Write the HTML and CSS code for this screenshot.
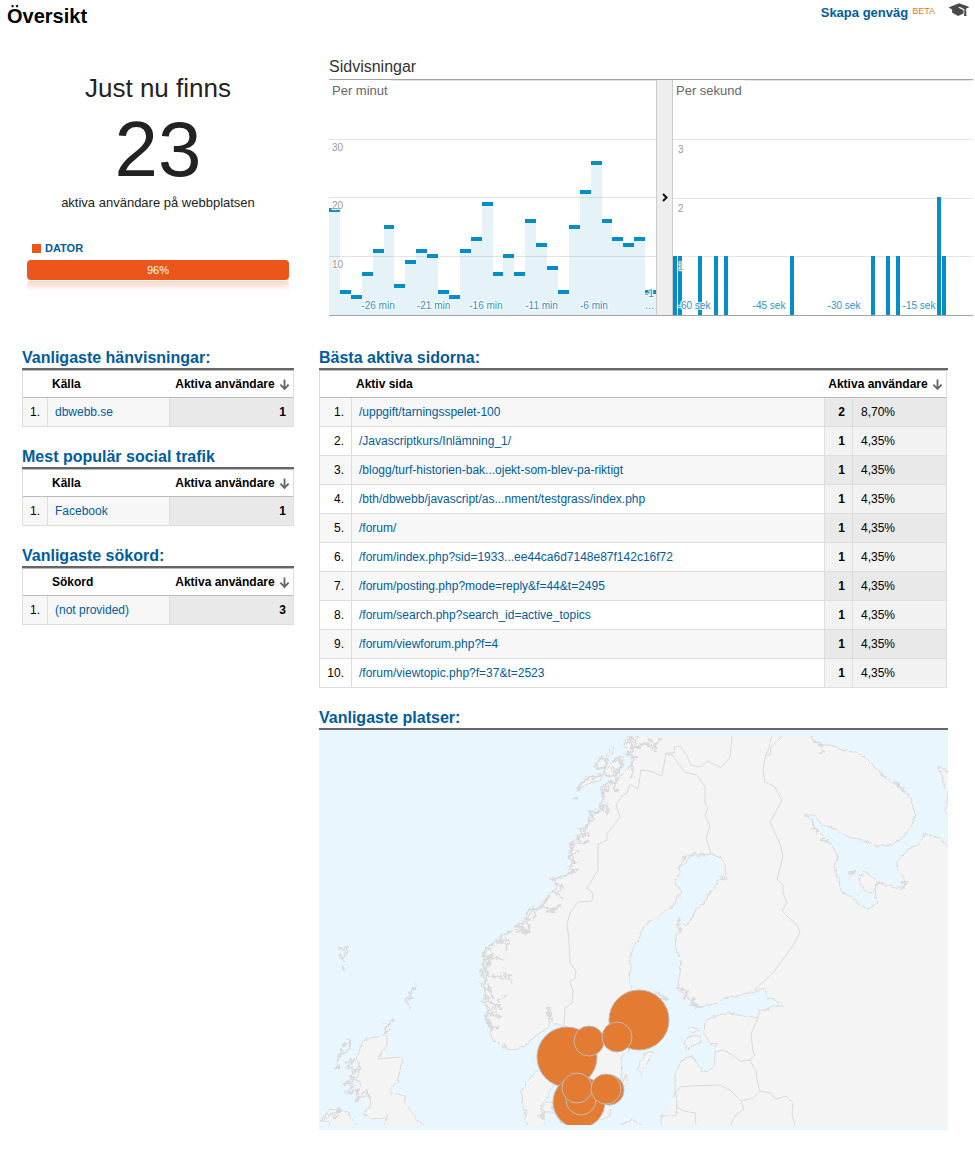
FILE: index.html
```html
<!DOCTYPE html>
<html lang="sv">
<head>
<meta charset="utf-8">
<title>Översikt</title>
<link rel="stylesheet" href="styles.css">
</head>
<body>
<header class="topbar">
  <h1>Översikt</h1>
  <div class="tools">
    <a class="shortcut" href="#">Skapa genväg</a><span class="beta">BETA</span>
    <svg class="hat" viewBox="0 0 22 14" aria-hidden="true"><path d="M0.500 4.500 L11 0.300 L21.500 4 L18 5.800 L18.500 13 H15.900 L16.400 9 V6.200 L12 4 L10 4.600 L15.600 7.200 L15.500 10.500 L10 13 L4 9.500 L4.200 6.600 Z" fill="#4a4a4a"/></svg>
  </div>
</header>
<main>
<div class="live">
  <section class="now">
    <div class="now-title">Just nu finns</div>
    <div class="now-count">23</div>
    <div class="now-sub">aktiva användare på webbplatsen</div>
    <div class="legend"><span class="swatch"></span><a href="#">DATOR</a></div>
    <div class="meter">96%</div>
    <div class="mirror"></div>
  </section>
  <section class="views">
    <h2 class="views-title">Sidvisningar</h2>
    <div class="charts">
      <div class="chart">
        <svg class="plot" viewBox="0 0 327 235" preserveAspectRatio="none" aria-hidden="true">
          <path id="area" fill="#e5f2f8"/>
          <path d="M62 .5H327M0 59.500H327M0 117.500H327M0 176.500H327" stroke="#6e7d85" stroke-opacity=".2"/>
          <path id="marks" fill="#058dc7"/>
        </svg>
        <span class="chart-name">Per minut</span>
        <span class="tick y30">30</span><span class="tick y20">20</span><span class="tick y10">10</span>
        <span class="time m26">-26 min</span><span class="time m21">-21 min</span><span class="time m16">-16 min</span><span class="time m11">-11 min</span><span class="time m6">-6 min</span><span class="time m1">-1 …</span>
      </div>
      <button class="toggle" aria-label="Växla"><svg viewBox="0 0 6 9" aria-hidden="true"><path d="M1 1 L4.500 4.500 L1 8" fill="none" stroke="#111" stroke-width="2"/></svg></button>
      <div class="chart">
        <svg class="plot" viewBox="0 0 300 235" preserveAspectRatio="none" aria-hidden="true">
          <path id="seconds" fill="#058dc7"/>
          <path d="M72 .5H300M0 59.500H300M0 118.500H300M0 176.500H300" stroke="#6e7d85" stroke-opacity=".2"/>
        </svg>
        <span class="chart-name">Per sekund</span>
        <span class="tick s3">3</span><span class="tick s2">2</span><span class="tick s1">1</span>
        <span class="time t60">-60 sek</span><span class="time t45">-45 sek</span><span class="time t30">-30 sek</span><span class="time t15">-15 sek</span>
      </div>
    </div>
  </section>
</div>
<div class="reports">
  <div class="col">
    <section class="report">
      <h2><a href="#">Vanligaste hänvisningar:</a></h2>
      <table class="small">
        <thead><tr><th class="n"></th><th>Källa</th><th class="sort">Aktiva användare <svg class="arrow" viewBox="0 0 12 12"><path d="M6 0V10M1.500 5.500L6 10.300L10.500 5.500"/></svg></th></tr></thead>
        <tbody><tr><td class="n">1.</td><td><a href="#">dbwebb.se</a></td><td class="v">1</td></tr></tbody>
      </table>
    </section>
    <section class="report">
      <h2><a href="#">Mest populär social trafik</a></h2>
      <table class="small">
        <thead><tr><th class="n"></th><th>Källa</th><th class="sort">Aktiva användare <svg class="arrow" viewBox="0 0 12 12"><path d="M6 0V10M1.500 5.500L6 10.300L10.500 5.500"/></svg></th></tr></thead>
        <tbody><tr><td class="n">1.</td><td><a href="#">Facebook</a></td><td class="v">1</td></tr></tbody>
      </table>
    </section>
    <section class="report">
      <h2><a href="#">Vanligaste sökord:</a></h2>
      <table class="small">
        <thead><tr><th class="n"></th><th>Sökord</th><th class="sort">Aktiva användare <svg class="arrow" viewBox="0 0 12 12"><path d="M6 0V10M1.500 5.500L6 10.300L10.500 5.500"/></svg></th></tr></thead>
        <tbody><tr><td class="n">1.</td><td><a href="#">(not provided)</a></td><td class="v">3</td></tr></tbody>
      </table>
    </section>
  </div>
  <div class="col">
    <section class="report">
      <h2><a href="#">Bästa aktiva sidorna:</a></h2>
      <table class="pages">
        <colgroup><col class="c-n"><col><col class="c-v"><col class="c-p"></colgroup>
        <thead><tr><th class="n"></th><th>Aktiv sida</th><th class="sort" colspan="2">Aktiva användare <svg class="arrow" viewBox="0 0 12 12"><path d="M6 0V10M1.500 5.500L6 10.300L10.500 5.500"/></svg></th></tr></thead>
        <tbody>
        <tr><td class="n">1.</td><td><a href="#">/uppgift/tarningsspelet-100</a></td><td class="v">2</td><td class="p">8,70%</td></tr>
        <tr><td class="n">2.</td><td><a href="#">/Javascriptkurs/Inlämning_1/</a></td><td class="v">1</td><td class="p">4,35%</td></tr>
        <tr><td class="n">3.</td><td><a href="#">/blogg/turf-historien-bak...ojekt-som-blev-pa-riktigt</a></td><td class="v">1</td><td class="p">4,35%</td></tr>
        <tr><td class="n">4.</td><td><a href="#">/bth/dbwebb/javascript/as...nment/testgrass/index.php</a></td><td class="v">1</td><td class="p">4,35%</td></tr>
        <tr><td class="n">5.</td><td><a href="#">/forum/</a></td><td class="v">1</td><td class="p">4,35%</td></tr>
        <tr><td class="n">6.</td><td><a href="#">/forum/index.php?sid=1933...ee44ca6d7148e87f142c16f72</a></td><td class="v">1</td><td class="p">4,35%</td></tr>
        <tr><td class="n">7.</td><td><a href="#">/forum/posting.php?mode=reply&amp;f=44&amp;t=2495</a></td><td class="v">1</td><td class="p">4,35%</td></tr>
        <tr><td class="n">8.</td><td><a href="#">/forum/search.php?search_id=active_topics</a></td><td class="v">1</td><td class="p">4,35%</td></tr>
        <tr><td class="n">9.</td><td><a href="#">/forum/viewforum.php?f=4</a></td><td class="v">1</td><td class="p">4,35%</td></tr>
        <tr><td class="n">10.</td><td><a href="#">/forum/viewtopic.php?f=37&amp;t=2523</a></td><td class="v">1</td><td class="p">4,35%</td></tr>
        </tbody>
      </table>
    </section>
    <section class="report">
      <h2><a href="#">Vanligaste platser:</a></h2>
      <svg class="map" viewBox="319 730 629 400" role="img" aria-label="Karta över Nordeuropa">
        <defs>
          <clipPath id="frame"><rect x="319" y="736" width="629" height="389"/></clipPath>
          <filter id="rough" filterUnits="userSpaceOnUse" x="310" y="720" width="650" height="420" color-interpolation-filters="sRGB"><feTurbulence type="fractalNoise" baseFrequency=".28" numOctaves="2" seed="4"/><feDisplacementMap in="SourceGraphic" scale="7" xChannelSelector="R" yChannelSelector="G"/></filter>
          <filter id="worn" filterUnits="userSpaceOnUse" x="310" y="720" width="650" height="420" color-interpolation-filters="sRGB"><feTurbulence type="fractalNoise" baseFrequency=".2" numOctaves="2" seed="9"/><feDisplacementMap in="SourceGraphic" scale="4" xChannelSelector="R" yChannelSelector="G"/></filter>
        </defs>
        <g clip-path="url(#frame)">
          <g class="land" filter="url(#worn)">
            <path d="M632 728 L629 740 L633 748 L628 753 L634 760 L629 768 L623 774 L618 778 L612 784 L604 788 L601 797 L608 803 L604 809 L597 813 L589 815 L590 822 L584 829 L579 834 L580 842 L573 846 L570 853 L574 860 L570 868 L566 875 L555 880 L557 888 L550 893 L546 900 L541 907 L532 910 L527 919 L521 928 L509 932 L502 940 L491 948 L484 954 L483 965 L487 975 L484 983 L485 997 L488 1010 L487 1022 L493 1027 L490 1033 L493 1040 L501 1045 L506 1049 L513 1050 L523 1047 L531 1040 L540 1032 L548 1028 L550 1023 L547 1013 L550 1007 L552 1009 L551 1018 L555 1025 L557 1022 L560 1026 L565 1026 L569 1042 L573 1062 L582 1080 L586 1100 L588 1117 L600 1120 L610 1115 L611 1102 L620 1098 L622 1078 L621 1063 L623 1053 L630 1049 L635 1043 L647 1035 L650 1025 L638 1005 L630 992 L632 986 L629 977 L631 968 L630 957 L632 948 L638 941 L642 931 L644 926 L650 921 L659 916 L666 910 L672 908 L676 899 L682 892 L676 885 L675 880 L680 874 L679 866 L686 862 L690 855 L699 855 L711 854 L719 857 L725 863 L726 876 L727 880 L718 879 L714 888 L707 897 L704 904 L696 910 L692 918 L686 925 L677 924 L680 932 L675 936 L676 949 L681 960 L680 973 L677 989 L685 994 L692 1002 L700 1007 L717 1003 L724 999 L737 996 L747 993 L756 991 L765 988 L767 998 L778 1001 L784 1006 L773 1006 L766 1010 L759 1010 L758 1018 L747 1017 L730 1013 L715 1016 L705 1021 L704 1034 L711 1044 L716 1043 L714 1067 L707 1072 L701 1070 L693 1056 L686 1058 L680 1064 L675 1075 L675 1107 L670 1113 L662 1115 L660 1130 L955 1130 L955 852 L948 847 L942 840 L938 837 L931 836 L925 833 L918 845 L908 849 L897 862 L897 868 L904 879 L906 888 L895 888 L885 884 L878 881 L873 892 L867 893 L860 884 L859 877 L864 872 L873 877 L878 882 L875 889 L877 903 L869 909 L857 904 L853 897 L842 893 L839 881 L834 866 L838 856 L830 843 L820 839 L825 838 L815 828 L811 819 L804 815 L814 815 L823 825 L835 829 L848 837 L863 840 L876 846 L887 846 L900 840 L910 829 L916 815 L913 808 L912 798 L897 785 L889 781 L882 775 L875 767 L864 756 L853 752 L842 750 L830 745 L822 745 L814 741 L806 728 Z"/>
            <path d="M938 766L955 776V822L945 812L948 795ZM687 1029L693 1026L699 1030L693 1034ZM684 1042L689 1036L700 1036L701 1042L692 1046L687 1051ZM640 1063L645 1053L653 1051L648 1063L641 1074L638 1070ZM628 1084L626 1074L620 1089ZM620 1125L633 1120L650 1130H620M662 1115L676 1116L677 1095"/>
            <path d="M596 763L602 757L607 760L605 768L598 769ZM612 763L618 758L623 757L622 767L615 775L608 777L603 772ZM607 755L612 745L614 748L609 757ZM577 793L580 785L587 778L597 777L603 774L600 781L593 782L585 785ZM623 743L628 736L638 737L635 745L627 748Z"/>
            <path d="M566 1068L558 1069L548 1069L540 1070L533 1074L529 1080L525 1086L521 1092L522 1105L526 1112L524 1120L530 1130H543L545 1117L540 1105L548 1098L549 1091L555 1083L558 1076L568 1072ZM545 1104L552 1102L553 1112L545 1112L541 1107ZM558 1104H570L574 1120L561 1123L555 1114Z"/>
            <path d="M387 1036L367 1038L362 1043L358 1054L357 1060L360 1068L357 1079L361 1085L357 1092L360 1099L369 1094L371 1104L364 1115L371 1119L381 1118L388 1115L382 1129H430L418 1121L413 1115L406 1103L403 1095L392 1093L389 1089L397 1083L400 1070L403 1060L399 1057L377 1059L387 1045Z"/>
            <path d="M320 1121L330 1109L349 1112L351 1119L361 1130H331L329 1123Z"/>
          </g>
          <g class="borders">
            <path d="M630 784L627 793L622 796L616 805L620 817L607 834L607 840L598 844L598 870L587 888L593 893L592 901L578 902L570 913L567 924L569 940L570 963L576 971L575 979L570 981L573 992L572 1003L565 1008L564 1026"/>
            <path d="M630 784L638 789L641 770L650 771L662 776L666 753L675 753L674 747L680 746L687 756L691 765L700 767L708 761L721 768L730 757L732 736"/>
            <path d="M665 754L672 755L685 772L697 775L705 787V803L708 808L705 815L710 826L706 838L711 854"/>
            <path d="M772 736L768 750L765 758L763 770L765 782L774 786L782 800L770 822L780 844L783 856L779 872L777 879L783 885L783 893L787 902L782 911L787 916L797 925L800 933L792 947L773 973L754 990M782 736L771 747L770 755L765 755"/>
            <path d="M758 1018L751 1034L753 1052L755 1055L750 1060L740 1061L731 1054L723 1050L715 1052M750 1060L756 1072L757 1080L760 1091L753 1098L741 1101L731 1091L720 1085L690 1086L680 1087L675 1094M741 1101L744 1109L735 1116L730 1126M760 1091L770 1093L776 1099L786 1096L793 1103L792 1114L795 1126M676 1107L684 1111L695 1113L696 1126"/>
          </g>
          <g class="coast" filter="url(#rough)">
            <path d="M632 738L640 748L633 748L647 743L652 749L661 738M648 738L655 745L656 752M627 755L636 757L629 767M633 764L632 777M618 777L613 790L620 790M612 781L601 787L602 795L609 787M604 795L600 807L608 806L607 814L600 808M600 812L589 811L594 820L588 823L584 833M589 817L587 827L580 829L588 835L577 836L580 844L590 841M577 839L571 844L572 856L580 850M574 847L568 858L576 862L569 867L574 872L567 874L578 869M565 877L551 879L558 884L563 888L554 892L562 898M549 895L543 906L552 912L560 906L547 911M542 908L528 910L525 920L516 926L528 930L517 932M536 911L534 918L527 921L530 931L522 934"/>
            <path d="M510 931L501 936L499 943L509 940L506 950M499 939L488 947L493 955L485 957L499 958L505 960M486 947L482 957L489 965L481 972L486 980L481 985L488 991L483 1001L489 1009L485 1018L491 1029L499 1026M484 951L490 963L483 965L488 975L500 977L512 975M503 978L506 971M508 977L512 982M487 984L493 997L486 999L496 1006L487 1012L501 1018M491 1014L500 1007L489 1002M497 1002L508 994M488 1018L494 1030"/>
            <path d="M596 763L602 757L607 760L605 768L598 769ZM612 763L618 758L622 767L615 775L608 777L603 772M577 793L580 785L587 778L597 777L603 774M620 755L622 764L616 775L613 767M626 744L632 737L632 752L626 754M574 798L577 799"/>
            <path d="M339 950L348 947L345 955L340 955L345 962M342 965L345 970M416 985L410 994L412 998L405 999L410 1007M395 1019L386 1026L384 1033L391 1029M350 1040L342 1048L340 1056L350 1048ZM339 1055L336 1069L340 1066M346 1062L355 1060L347 1067L356 1070L350 1077L357 1080L344 1083L354 1086L346 1094L357 1090L357 1100L366 1090L370 1098"/>
            <path d="M548 1007L551 1021M503 1045L509 1049M687 854L682 862L678 869M690 856L695 852M700 853L706 855M719 876L726 878M680 918L677 924M676 925L681 930M677 986L687 993L685 998L695 1000L692 1005L701 1007M813 741L822 745L823 752L818 754M880 774L886 778M895 782L905 793L909 796M818 833L813 828M820 841L828 840M847 874L854 872L851 878M900 883L906 882L903 888M877 884L883 883M656 992L667 999L660 1001M536 1117L544 1114L541 1119M322 1120L341 1109L333 1119"/>
          </g>
          <g class="spots">
            <circle cx="639" cy="1020" r="30"/><circle cx="567" cy="1057" r="30"/><circle cx="579" cy="1102" r="26"/><circle cx="589" cy="1041" r="15"/><circle cx="617" cy="1037" r="15"/><circle cx="581" cy="1100" r="15"/><circle cx="577" cy="1088" r="15"/><circle cx="609" cy="1090" r="15"/><circle cx="606" cy="1089" r="15"/>
          </g>
        </g>
      </svg>
    </section>
  </div>
</div>
</main>
<script src="charts.js"></script>
</body>
</html>
```
FILE: styles.css
```css
* { box-sizing: border-box; }
body { margin: 0; background: #fff; color: #000; font-family: "Liberation Sans", Arial, sans-serif; font-size: 12px; line-height: 16px; }
a { color: #005c9c; text-decoration: none; }
h1, h2 { margin: 0; }
.topbar { display: flex; justify-content: space-between; height: 54px; padding: 3px 5px 0 7px; }
h1 { font-size: 20px; line-height: 26px; }
.tools { display: flex; align-items: flex-start; }
.shortcut { font-size: 13px; line-height: 20px; font-weight: bold; }
.beta { margin: 0 13px 0 4px; color: #dc7a38; font-size: 9px; }
.hat { width: 22px; height: 14px; }
.live { display: grid; grid-template-columns: 262px minmax(0, 1fr); gap: 40px; padding: 0 2px 0 27px; min-height: 294px; }
.now { padding-top: 18px; text-align: center; color: #222; }
.now-title { font-size: 26px; line-height: 32px; }
.now-count { font-size: 78px; line-height: 90px; }
.now-sub { font-size: 13px; line-height: 18px; }
.legend { display: flex; align-items: center; gap: 4px; margin: 28px 0 4px 5px; font-size: 11px; font-weight: bold; }
.swatch { width: 9px; height: 9px; background: #ed561b; }
.meter { height: 20px; border-radius: 4px; background: #ed561b; color: #fff; font-size: 11px; line-height: 20px; }
.mirror { height: 10px; margin-top: 1px; background: linear-gradient(#fbd5c6, #fff); border-radius: 4px 4px 0 0; }
.views-title { color: #333; font-size: 16px; font-weight: normal; line-height: 25px; }
.charts { display: grid; grid-template-columns: 327fr 17px 300fr; height: 237px; border-top: 1px solid #a5a5a5; border-bottom: 1px solid #a5a5a5; }
.chart { position: relative; overflow: hidden; }
.plot { display: block; width: 100%; height: 100%; }
.chart-name { position: absolute; top: 3px; left: 3px; color: #666; font-size: 13px; }
.toggle { display: grid; place-items: center; padding: 0; border: 0 solid #ccc; border-width: 0 1px; background: #eee; }
.toggle svg { width: 6px; height: 9px; }
.tick, .time { position: absolute; font-size: 10px; line-height: 12px; white-space: nowrap; text-shadow: 0 0 2px #fff, 1px 1px 1px #fff, -1px -1px 1px #fff, 1px -1px 1px #fff, -1px 1px 1px #fff; }
.tick { left: 3px; color: #999; }
.time { bottom: 3px; color: #2d93c8; transform: translateX(-50%); }
.y30 { top: 62px; } .y20 { top: 120px; } .y10 { top: 179px; }
.s3 { top: 64px; } .s2 { top: 123px; } .s1 { top: 181px; }
.s3, .s2, .s1 { left: 5px; }
.m26 { left: 15%; } .m21 { left: 32%; } .m16 { left: 48%; } .m11 { left: 65%; } .m6 { left: 81%; } .m1 { left: 98%; width: 12px; white-space: normal; text-align: center; }
.t60 { left: 7%; } .t45 { left: 32%; } .t30 { left: 57%; } .t15 { left: 82%; }
.reports { display: grid; grid-template-columns: 272fr 629fr; gap: 25px; padding: 0 27px 25px 22px; }
.col { min-width: 0; }
.report { margin-bottom: 20px; }
.report h2 { font-size: 16px; line-height: 20px; border-bottom: 2px solid #666; }
table { width: 100%; border-collapse: separate; border-spacing: 0; table-layout: fixed; border: 1px solid #ddd; border-top-color: #bbb; }
.pages { width: calc(100% - 1px); }
th, td { padding: 0 7px; text-align: left; white-space: nowrap; }
th { height: 27px; padding-left: 5px; border-bottom: 1px solid #bbb; }
td { height: 29px; border-bottom: 1px solid #ddd; }
tbody tr:last-child td { height: 28px; border-bottom: 0; }
td + td { border-left: 1px solid #ddd; }
tbody tr:nth-child(odd) { background: #f7f7f7; }
.n { width: 24px; text-align: right; }
.small .sort { width: 124px; }
.sort { padding: 0 3px 0 0; text-align: right; }
.arrow { width: 11px; height: 12px; margin-left: 1px; vertical-align: -3px; fill: none; stroke: #666; stroke-width: 2; }
.v { background: #f2f2f2; font-weight: bold; text-align: right; }
.p { padding-left: 8px; background: #f2f2f2; }
tr:nth-child(odd) > .v, tr:nth-child(odd) > .p { background: #e9e9e9; }
.c-n { width: 31px; } .c-v { width: 28px; } .c-p { width: 94px; }
.map { display: block; width: 100%; height: auto; background: #e9f6fe; }
.land { fill: #f4f4f4; stroke: #d8d8d8; stroke-linejoin: round; }
.borders, .coast { fill: none; stroke: #dadada; }
.coast { stroke-width: 2; }
.spots { fill: #e47b32; stroke: #bbb; }
```
FILE: charts.js
```js
const perMinute = [18, 4, 3, 7, 11, 15, 5, 9, 11, 10, 4, 3, 11, 13, 19, 7, 10, 7, 16, 12, 8, 4, 15, 21, 26, 16, 13, 12, 13, 4];
const step = 327 / perMinute.length;
let area = "";
let marks = "";
perMinute.forEach((value, i) => {
  const x = Math.round(i * step);
  const next = Math.round((i + 1) * step);
  const y = Math.round(235 - value * 5.86);
  area += `M${x} ${y}H${next}V235H${x}Z`;
  marks += `M${x} ${y - 2}H${next}V${y + 2}H${x}Z`;
});
document.getElementById("area").setAttribute("d", area);
document.getElementById("marks").setAttribute("d", marks);

const perSecond = [[0, 1], [5, 1], [25, 1], [41, 1], [51, 1], [117, 1], [198, 1], [213, 1], [223, 1], [264, 2], [269, 1]];
document.getElementById("seconds").setAttribute("d", perSecond.map(([x, n]) => `M${x} 235V${235 - n * 59}h4V235Z`).join(""));
```
